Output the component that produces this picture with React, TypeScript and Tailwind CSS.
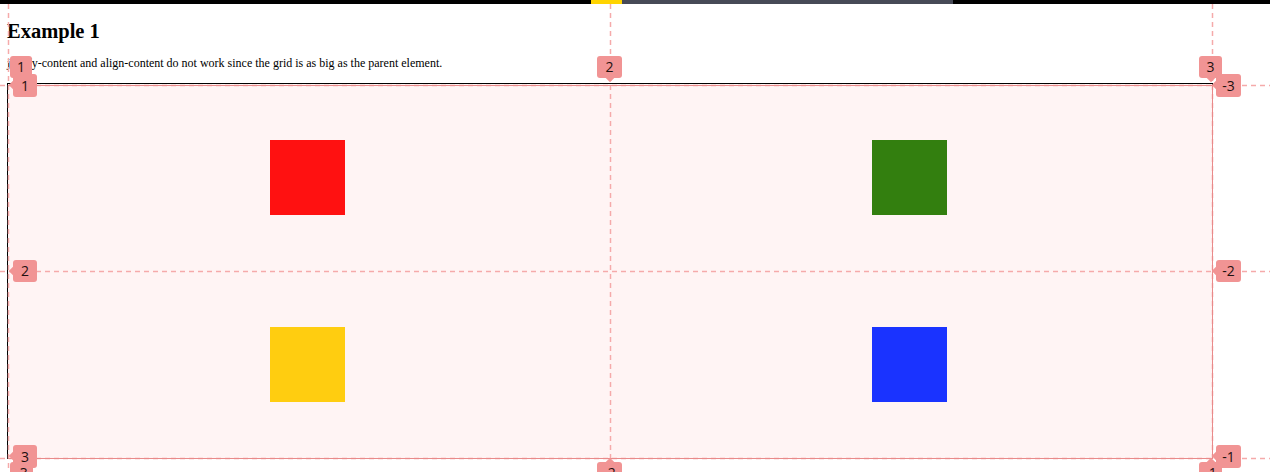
import React from "react";

type Lbl = { x: number; y: number; w: number; h: number; t: string; arrow: "down" | "left" | "up" };

const labels: Lbl[] = [
  { x: 10, y: 56, w: 22, h: 22, t: "1", arrow: "down" },
  { x: 597, y: 56, w: 25, h: 22, t: "2", arrow: "down" },
  { x: 1199, y: 56, w: 23, h: 22, t: "3", arrow: "down" },
  { x: 10, y: 462, w: 23, h: 22, t: "-3", arrow: "up" },
  { x: 597, y: 462, w: 25, h: 22, t: "-2", arrow: "up" },
  { x: 1199, y: 462, w: 23, h: 22, t: "-1", arrow: "up" },
  { x: 13, y: 74, w: 24, h: 23, t: "1", arrow: "left" },
  { x: 1216, y: 74, w: 25, h: 23, t: "-3", arrow: "left" },
  { x: 13, y: 260, w: 24, h: 22, t: "2", arrow: "left" },
  { x: 1216, y: 260, w: 25, h: 22, t: "-2", arrow: "left" },
  { x: 13, y: 445, w: 24, h: 23, t: "3", arrow: "left" },
  { x: 1216, y: 445, w: 25, h: 23, t: "-1", arrow: "left" },
];

function Label({ l }: { l: Lbl }) {
  return (
    <div
      className="absolute flex items-center justify-center rounded-[3px] bg-[#f19494] text-[14px] leading-none text-[#1f1010]"
      style={{ left: l.x, top: l.y, width: l.w, height: l.h, fontFamily: '"Open Sans", "Noto Sans", sans-serif' }}
    >
      {l.arrow === "down" && (
        <span className="absolute bottom-[-3px] left-1/2 h-[6px] w-[6px] -translate-x-1/2 rotate-45 bg-[#f19494]" />
      )}
      {l.arrow === "up" && (
        <span className="absolute top-[-3px] left-1/2 h-[6px] w-[6px] -translate-x-1/2 rotate-45 bg-[#f19494]" />
      )}
      {l.arrow === "left" && (
        <span className="absolute left-[-3px] top-[8px] h-[6px] w-[6px] rotate-45 bg-[#f19494]" />
      )}
      <span className="relative">{l.t}</span>
    </div>
  );
}

export default function App() {
  return (
    <div className="relative h-[472px] w-[1270px] overflow-hidden bg-white">
      <div className="flex h-[4px] w-full">
        <div className="w-[591px] bg-black" />
        <div className="w-[31px] bg-[#ffd400]" />
        <div className="w-[331px] bg-[#474a57]" />
        <div className="flex-1 bg-black" />
      </div>
      <div className="pl-[7px]" style={{ fontFamily: '"Liberation Serif", "Times New Roman", serif' }}>
        <h3 className="mt-[16px] text-[20.5px] font-bold leading-[22px] text-black">Example 1</h3>
        <p className="mt-[14px] text-[12px] leading-[14px] text-black">
          justify-content and align-content do not work since the grid is as big as the parent element.
        </p>
        <div className="mt-[13px] grid h-[376px] w-[1206px] grid-cols-2 grid-rows-2 border border-black bg-[#fff4f4]">
          <div className="flex items-center justify-center pr-[4px]">
            <div className="h-[75px] w-[75px] bg-[#ff1111]" />
          </div>
          <div className="flex items-center justify-center pr-[4px]">
            <div className="h-[75px] w-[75px] bg-[#337f0f]" />
          </div>
          <div className="flex items-center justify-center pr-[4px]">
            <div className="h-[75px] w-[75px] bg-[#ffcd10]" />
          </div>
          <div className="flex items-center justify-center pr-[4px]">
            <div className="h-[75px] w-[75px] bg-[#1a33ff]" />
          </div>
        </div>
      </div>

      <svg className="pointer-events-none absolute left-0 top-0" width="1270" height="472">
        <g stroke="#f5aaaa" strokeWidth="1.5" strokeDasharray="5 4" fill="none">
          <line x1="0" y1="85.5" x2="1270" y2="85.5" />
          <line x1="0" y1="271.5" x2="1270" y2="271.5" />
          <line x1="0" y1="458.5" x2="1270" y2="458.5" />
          <line x1="8.5" y1="4" x2="8.5" y2="472" />
          <line x1="610.5" y1="4" x2="610.5" y2="472" />
          <line x1="1212.5" y1="4" x2="1212.5" y2="472" />
        </g>
        <g stroke="#e98a8a" strokeWidth="1" fill="none">
          <line x1="8" y1="85.5" x2="1213" y2="85.5" />
          <line x1="8" y1="458.5" x2="1213" y2="458.5" />
          <line x1="1212.5" y1="85" x2="1212.5" y2="459" />
        </g>
      </svg>

      {labels.map((l, i) => (
        <Label key={i} l={l} />
      ))}
    </div>
  );
}
